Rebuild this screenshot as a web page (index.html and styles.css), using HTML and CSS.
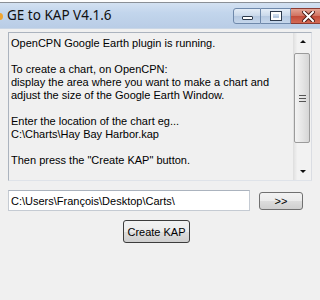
FILE: index.html
```html
<!DOCTYPE html>
<html lang="en">
<head>
  <meta charset="UTF-8">
  <title>GE to KAP V4.1.6</title>
  <link rel="stylesheet" href="styles.css">
</head>
<body>
  <div class="window">
    <div class="backdrop"></div>
    <div class="titlebar">
      <span class="app-icon"></span>
      <span class="title">GE to KAP V4.1.6</span>
      <div class="caption-buttons">
        <div class="cap-btn minimize"><span class="glyph-min"></span></div>
        <div class="cap-btn maximize"><span class="glyph-max"></span></div>
        <div class="cap-btn close">
          <svg width="13" height="11" viewBox="0 0 13 11">
            <path d="M2 1 L11 10 M11 1 L2 10" stroke="#4a1a14" stroke-width="4" stroke-linecap="square"/>
            <path d="M2 1 L11 10 M11 1 L2 10" stroke="#ffffff" stroke-width="2" stroke-linecap="square"/>
          </svg>
        </div>
      </div>
    </div>

    <div class="client">
      <div class="log">
        <div class="log-text">OpenCPN Google Earth plugin is running.

To create a chart, on OpenCPN:
display the area where you want to make a chart and
adjust the size of the Google Earth Window.

Enter the location of the chart eg...
C:\Charts\Hay Bay Harbor.kap

Then press the "Create KAP" button.</div>
        <div class="scrollbar">
          <div class="arrow up"><span class="tri-up"></span></div>
          <div class="track">
            <div class="thumb"><span class="grip"></span></div>
          </div>
          <div class="arrow down"><span class="tri-down"></span></div>
        </div>
      </div>

      <div class="path-row">
        <div class="path-box">C:\Users\François\Desktop\Carts\</div>
        <div class="btn browse">&gt;&gt;</div>
      </div>

      <div class="actions">
        <div class="btn create">Create KAP</div>
      </div>
    </div>
  </div>
</body>
</html>
```

FILE: styles.css
```css
body {
  margin: 0;
  padding: 0;
  background-color: #f0f0f0;
  font-family: "Liberation Sans", Arial, sans-serif;
  font-size: 11px;
  color: #000;
}
.window {
  width: 320px;
  height: 300px;
  overflow: hidden;
  background-color: #f0f0f0;
}
.backdrop {
  height: 2px;
  background-color: #fdfdfd;
  border-bottom: 1px solid #8a8f96;
}
.titlebar {
  position: relative;
  height: 25px;
  display: flex;
  align-items: center;
  background: linear-gradient(#d3e1f1, #c2d5ec 40%, #b9cde6);
  border-bottom: 1px solid #c9d6e6;
}
.app-icon {
  position: absolute;
  left: -4px;
  top: 10px;
  width: 7px;
  height: 7px;
  border-radius: 50%;
  background-color: #f0a531;
}
.title {
  margin-left: 7px;
  margin-top: -1px;
  font-family: "Noto Sans", "Open Sans", sans-serif;
  font-size: 13.5px;
  color: #101010;
}
.caption-buttons {
  position: absolute;
  top: 5px;
  right: -6px;
  display: flex;
}
.cap-btn {
  height: 14px;
  display: flex;
  align-items: center;
  justify-content: center;
  border: 1px solid #6f89ab;
  background: linear-gradient(#e4edf7, #c9d8ea 50%, #b5c8e0 51%, #c6d7ec);
}
.minimize {
  width: 26px;
  border-radius: 3px 0 0 3px;
}
.maximize {
  width: 29px;
  border-left: none;
}
.close {
  width: 34px;
  border-left: none;
  border-color: #8b3b33;
  border-radius: 0 3px 3px 0;
  background: linear-gradient(#e4a494, #d0715f 50%, #c24a37 51%, #d46a55);
}
.glyph-min {
  width: 9px;
  height: 2px;
  margin-top: 4px;
  background-color: #fff;
  border: 1px solid #2d3a4c;
  border-radius: 1px;
}
.glyph-max {
  width: 6px;
  height: 4px;
  border: 2px solid #fff;
  outline: 1px solid #2d3a4c;
}

.client {
  padding: 3px 0 0 8px;
}
.log {
  width: 302px;
  height: 147px;
  display: flex;
  background-color: #f0f0f0;
  border: 1px solid #abb3be;
  border-right-color: #dadde3;
  border-bottom-color: #dfe3e9;
}
.log-text {
  flex: 1;
  padding: 4px 0 0 2px;
  line-height: 13px;
  white-space: pre;
  overflow: hidden;
}
.scrollbar {
  width: 17px;
  display: flex;
  flex-direction: column;
  background: linear-gradient(90deg, #e3e3e3, #f2f2f2 20%, #f2f2f2);
  border-left: 1px solid #e0e0e0;
}
.arrow {
  height: 17px;
  display: flex;
  align-items: center;
  justify-content: center;
}
.tri-up {
  width: 0;
  height: 0;
  border-left: 3px solid transparent;
  border-right: 3px solid transparent;
  border-bottom: 3px solid #101010;
}
.tri-down {
  width: 0;
  height: 0;
  border-left: 3px solid transparent;
  border-right: 3px solid transparent;
  border-top: 3px solid #101010;
}
.track {
  flex: 1;
  padding: 3px 1px 20px 0;
}
.thumb {
  height: 88px;
  display: flex;
  align-items: center;
  justify-content: center;
  border: 1px solid #9b9b9b;
  border-radius: 2px;
  background: linear-gradient(90deg, #f3f3f3, #e6e6e6 50%, #d6d6d6);
}
.grip {
  width: 7px;
  height: 1px;
  background-color: #555;
  box-shadow: 0 3px 0 #555, 0 -3px 0 #555;
}

.path-row {
  display: flex;
  align-items: flex-start;
  margin-top: 9px;
}
.path-box {
  width: 238px;
  height: 19px;
  padding-left: 2px;
  line-height: 21px;
  background-color: #fff;
  border: 1px solid #c5cbd3;
  border-top-color: #abb3be;
}
.btn {
  display: flex;
  align-items: center;
  justify-content: center;
  border: 1px solid #707070;
  border-radius: 3px;
  background: linear-gradient(#f2f2f2, #ebebeb 50%, #dddddd 51%, #cfcfcf);
  box-sizing: border-box;
}
.browse {
  width: 44px;
  height: 18px;
  margin: 2px 0 0 9px;
}
.actions {
  display: flex;
  margin-top: 9px;
  padding-left: 115px;
}
.create {
  width: 67px;
  height: 23px;
  border-color: #3c3c3c;
}
```
